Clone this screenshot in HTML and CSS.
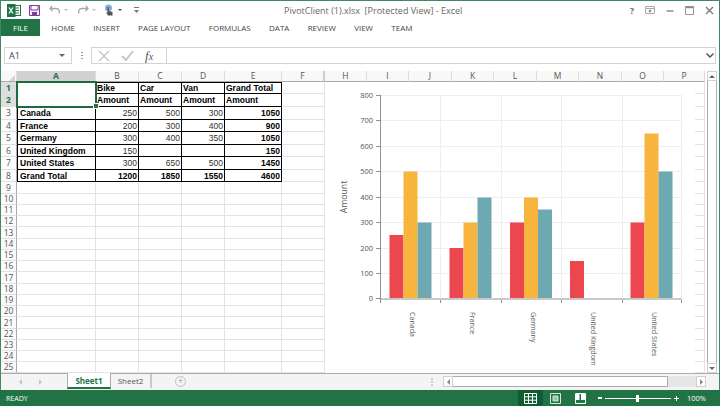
FILE: index.html
```html
<!DOCTYPE html>
<html>
    <head>
        <title>PivotClient (1).xlsx [Protected View] - Excel</title>
        <link rel="stylesheet" href="styles.css">
    </head>
    <body>
        <div id="window">
            <div id="titlebar">
                <div class="quick">
                    <svg width="14" height="13" viewBox="0 0 14 13"><rect x="6" y="1.5" width="7.5" height="10" fill="#fff" stroke="#217346"/><path d="M8 4h4M8 6.500h4M8 9h4" stroke="#217346"/><rect x="0" y="0" width="8.500" height="13" fill="#217346"/><path d="M2 3.500l4 6M6 3.500l-4 6" stroke="#fff" stroke-width="1.300" fill="none"/></svg>
                    <svg class="save" width="11" height="11" viewBox="0 0 11 11"><path d="M.5.500h10v10H.5z" fill="#f3e9f7" stroke="#7d3c98"/><path d="M2 .500h7v4.500H2z" fill="#fff" stroke="#7d3c98"/><path d="M3 7h5v3.500H3z" fill="#7d3c98"/></svg>
                    <svg class="undo" width="12" height="10" viewBox="0 0 12 10"><path d="M3 1L1 3.500 3.500 6M1 3.500h6c3 0 4 2 3 5" fill="none" stroke="#a6a6a6" stroke-width="1.300"/></svg>
                    <i class="arrow"></i>
                    <svg class="redo" width="12" height="10" viewBox="0 0 12 10"><path d="M9 1l2 2.500L8.500 6M11 3.500H5c-3 0-4 2-3 5" fill="none" stroke="#a6a6a6" stroke-width="1.300"/></svg>
                    <i class="arrow"></i>
                    <svg class="touch" width="11" height="13" viewBox="0 0 11 13"><circle cx="4.500" cy="4" r="3.500" fill="#7fb2dc"/><path d="M3.500 3h1.500v4l3.500 1v3.500H4L2 8.500h1.500z" fill="#555"/></svg>
                    <i class="arrow dark"></i>
                    <svg class="custom" width="5" height="6" viewBox="0 0 5 6"><path d="M0 .5h5" stroke="#777"/><path d="M0 3h5L2.500 6z" fill="#777"/></svg>
                </div>
                <div class="doc-title">PivotClient (1).xlsx&nbsp; [Protected View] - Excel</div>
                <div class="controls">
                    <span class="help">?</span>
                    <svg width="10" height="8" viewBox="0 0 10 8"><path d="M.5.500h9v7h-9z" fill="none" stroke="#aaa"/><path d="M.5 2.500h9" stroke="#aaa"/><path d="M5 3.500v3M3.500 5h3" stroke="#777"/></svg>
                    <svg width="8" height="8" viewBox="0 0 8 8"><path d="M.5 5h7" stroke="#777" stroke-width="1.300"/></svg>
                    <svg width="9" height="9" viewBox="0 0 9 9"><path d="M.5.500h8v8h-8z" fill="none" stroke="#999"/><path d="M.5 1.500h8" stroke="#888" stroke-width="1.500"/></svg>
                    <svg width="9" height="9" viewBox="0 0 9 9"><path d="M1 1l7 7M8 1l-7 7" stroke="#777" stroke-width="1.300"/></svg>
                </div>
            </div>
            <div id="tabs">
                <div class="file-tab">FILE</div>
                <span>HOME</span>
                <span>INSERT</span>
                <span>PAGE LAYOUT</span>
                <span>FORMULAS</span>
                <span>DATA</span>
                <span>REVIEW</span>
                <span>VIEW</span>
                <span>TEAM</span>
            </div>
            <div id="formula-bar">
                <div class="name-box">A1<i class="arrow dark"></i></div>
                <div class="grip"></div>
                <div class="fx-box">
                    <svg width="12" height="12" viewBox="0 0 12 12"><path d="M1 1l10 10M11 1L1 11" stroke="#c6c6c6" stroke-width="1.300"/></svg>
                    <svg width="13" height="11" viewBox="0 0 13 11"><path d="M1 6l4 4 7-9" fill="none" stroke="#c6c6c6" stroke-width="2"/></svg>
                    <span class="fx">f<em>x</em></span>
                </div>
                <div class="formula-input"><svg width="8" height="5" viewBox="0 0 8 5"><path d="M.5.500L4 4 7.500.500" fill="none" stroke="#555" stroke-width="1.500"/></svg></div>
            </div>
            <div id="main">
                <div id="grid-wrap">
                    <table id="grid">
                        <colgroup>
                            <col class="c-row"><col class="c-a"><col class="c-43"><col class="c-43"><col class="c-43"><col class="c-e"><col class="c-43">
                            <col class="c-42"><col class="c-42"><col class="c-43"><col class="c-42"><col class="c-43"><col class="c-42"><col class="c-43"><col class="c-42"><col class="c-41">
                        </colgroup>
                        <tr class="head">
                            <th class="corner"><i></i></th><th class="on">A</th><th>B</th><th>C</th><th>D</th><th>E</th><th class="thick">F</th>
                            <th>H</th><th>I</th><th>J</th><th>K</th><th>L</th><th>M</th><th>N</th><th>O</th><th>P</th>
                        </tr>
                        <tr class="h12 top"><th class="on">1</th><td rowspan="2" class="sel"></td><td class="p">Bike</td><td class="p">Car</td><td class="p">Van</td><td class="p">Grand Total</td><td></td><td colspan="9"></td></tr>
                        <tr class="h13"><th class="on">2</th><td class="p">Amount</td><td class="p">Amount</td><td class="p">Amount</td><td class="p">Amount</td><td></td><td colspan="9"></td></tr>
                        <tr class="h13"><th>3</th><td class="p name">Canada</td><td class="p num">250</td><td class="p num">500</td><td class="p num">300</td><td class="p tot">1050</td><td></td><td colspan="9"></td></tr>
                        <tr class="h12"><th>4</th><td class="p name">France</td><td class="p num">200</td><td class="p num">300</td><td class="p num">400</td><td class="p tot">900</td><td></td><td colspan="9"></td></tr>
                        <tr class="h13"><th>5</th><td class="p name">Germany</td><td class="p num">300</td><td class="p num">400</td><td class="p num">350</td><td class="p tot">1050</td><td></td><td colspan="9"></td></tr>
                        <tr class="h12"><th>6</th><td class="p name">United Kingdom</td><td class="p num">150</td><td class="p num"></td><td class="p num"></td><td class="p tot">150</td><td></td><td colspan="9"></td></tr>
                        <tr class="h13"><th>7</th><td class="p name">United States</td><td class="p num">300</td><td class="p num">650</td><td class="p num">500</td><td class="p tot">1450</td><td></td><td colspan="9"></td></tr>
                        <tr class="h12"><th>8</th><td class="p name">Grand Total</td><td class="p tot">1200</td><td class="p tot">1850</td><td class="p tot">1550</td><td class="p tot">4600</td><td></td><td colspan="9"></td></tr>
                        <tr class="h12"><th>9</th><td></td><td></td><td></td><td></td><td></td><td></td><td colspan="9"></td></tr>
                        <tr class="h11"><th>10</th><td></td><td></td><td></td><td></td><td></td><td></td><td colspan="9"></td></tr>
                        <tr class="h11"><th>11</th><td></td><td></td><td></td><td></td><td></td><td></td><td colspan="9"></td></tr>
                        <tr class="h11"><th>12</th><td></td><td></td><td></td><td></td><td></td><td></td><td colspan="9"></td></tr>
                        <tr class="h12"><th>13</th><td></td><td></td><td></td><td></td><td></td><td></td><td colspan="9"></td></tr>
                        <tr class="h11"><th>14</th><td></td><td></td><td></td><td></td><td></td><td></td><td colspan="9"></td></tr>
                        <tr class="h11"><th>15</th><td></td><td></td><td></td><td></td><td></td><td></td><td colspan="9"></td></tr>
                        <tr class="h11"><th>16</th><td></td><td></td><td></td><td></td><td></td><td></td><td colspan="9"></td></tr>
                        <tr class="h12"><th>17</th><td></td><td></td><td></td><td></td><td></td><td></td><td colspan="9"></td></tr>
                        <tr class="h11"><th>18</th><td></td><td></td><td></td><td></td><td></td><td></td><td colspan="9"></td></tr>
                        <tr class="h11"><th>19</th><td></td><td></td><td></td><td></td><td></td><td></td><td colspan="9"></td></tr>
                        <tr class="h11"><th>20</th><td></td><td></td><td></td><td></td><td></td><td></td><td colspan="9"></td></tr>
                        <tr class="h12"><th>21</th><td></td><td></td><td></td><td></td><td></td><td></td><td colspan="9"></td></tr>
                        <tr class="h11"><th>22</th><td></td><td></td><td></td><td></td><td></td><td></td><td colspan="9"></td></tr>
                        <tr class="h11"><th>23</th><td></td><td></td><td></td><td></td><td></td><td></td><td colspan="9"></td></tr>
                        <tr class="h11"><th>24</th><td></td><td></td><td></td><td></td><td></td><td></td><td colspan="9"></td></tr>
                        <tr class="h11"><th>25</th><td></td><td></td><td></td><td></td><td></td><td></td><td colspan="9"></td></tr>
                    </table>
                    <span class="handle"></span>
                    <!-- chart floats over the sheet, viewBox uses page coordinates -->
                    <svg id="chart" width="370" height="291" viewBox="325 82 370 291">
                        <rect x="325" y="82" width="370" height="291" fill="#fff"/>
                        <g class="gridline">
                            <path d="M380 95.500h302M380 120.500h302M380 146.500h302M380 171.500h302M380 197.500h302M380 222.500h302M380 248.500h302M380 273.500h302"/>
                            <path d="M440.500 95v204M501.500 95v204M561.500 95v204M622.500 95v204M681.500 95v204"/>
                        </g>
                        <g class="ticks">
                            <path d="M376 95.500h4M376 120.500h4M376 146.500h4M376 171.500h4M376 197.500h4M376 222.500h4M376 248.500h4M376 273.500h4M376 298.500h4"/>
                            <path d="M380.500 95v208M440.500 299v4M501.500 299v4M561.500 299v4M622.500 299v4M681.500 299v4"/>
                        </g>
                        <path d="M381 299h301" stroke="#c9c9c9" stroke-width="2"/>
                        <g class="red">
                            <rect x="389.500" y="235" width="14" height="63"/>
                            <rect x="449.500" y="248" width="14" height="50"/>
                            <rect x="510" y="222.500" width="14" height="75.500"/>
                            <rect x="570" y="261" width="14" height="37"/>
                            <rect x="630.500" y="222.500" width="14" height="75.500"/>
                        </g>
                        <g class="orange">
                            <rect x="403.500" y="171.500" width="14" height="126.500"/>
                            <rect x="463.500" y="222.500" width="14" height="75.500"/>
                            <rect x="524" y="197.500" width="14" height="100.500"/>
                            <rect x="644.500" y="133.500" width="14" height="164.500"/>
                        </g>
                        <g class="teal">
                            <rect x="417.500" y="222.500" width="14" height="75.500"/>
                            <rect x="477.500" y="197.500" width="14" height="100.500"/>
                            <rect x="538" y="209.500" width="14" height="88.500"/>
                            <rect x="658.500" y="171.500" width="14" height="126.500"/>
                        </g>
                        <g class="y-labels">
                            <text x="373" y="98">800</text>
                            <text x="373" y="123">700</text>
                            <text x="373" y="149">600</text>
                            <text x="373" y="174">500</text>
                            <text x="373" y="200">400</text>
                            <text x="373" y="225">300</text>
                            <text x="373" y="251">200</text>
                            <text x="373" y="276">100</text>
                            <text x="373" y="301">0</text>
                        </g>
                        <text class="y-title" transform="translate(347 197) rotate(-90)">Amount</text>
                        <g class="x-labels">
                            <text transform="translate(410 312) rotate(90)">Canada</text>
                            <text transform="translate(470 312) rotate(90)">France</text>
                            <text transform="translate(531 312) rotate(90)">Germany</text>
                            <text transform="translate(591 312) rotate(90)">United Kingdom</text>
                            <text transform="translate(652 312) rotate(90)">United States</text>
                        </g>
                    </svg>
                </div>
                <div id="vscroll">
                    <div class="sb-btn"><i class="up"></i></div>
                    <div class="sb-thumb"></div>
                    <div class="sb-btn"><i class="down"></i></div>
                </div>
            </div>
            <div id="sheetbar">
                <div class="nav"><i class="left"></i><i class="right"></i></div>
                <div class="sheet-tab active">Sheet1</div>
                <div class="sheet-tab">Sheet2</div>
                <div class="add">+</div>
                <div class="grip"></div>
                <div id="hscroll">
                    <div class="sb-btn"><i class="left"></i></div>
                    <div class="h-thumb"></div>
                    <div class="sb-btn"><i class="right"></i></div>
                </div>
            </div>
            <div id="status">
                <span class="ready">READY</span>
                <div class="view-btn on"><svg width="13" height="11" viewBox="0 0 13 11"><path d="M.5.500h12v10H.5zM.5 3.800h12M.5 7.200h12M4.500.500v10M8.500.500v10" fill="none" stroke="#fff"/></svg></div>
                <div class="view-btn"><svg width="11" height="11" viewBox="0 0 11 11"><path d="M.5.500h10v10H.5z" fill="none" stroke="#d5e6dc"/><path d="M3 3h5v5H3z" fill="#9cc4ad" stroke="#d5e6dc"/></svg></div>
                <div class="view-btn"><svg width="11" height="11" viewBox="0 0 11 11"><path d="M.5.500h10v10H.5z" fill="none" stroke="#fff"/><path d="M1 1h3.500v6H1zM6 1h4v6H6z" fill="#fff"/></svg></div>
                <div class="zoom">
                    <i class="minus"></i>
                    <div class="slider"><i></i></div>
                    <i class="plus"></i>
                </div>
                <span class="pct">100%</span>
            </div>
        </div>
    </body>
</html>
```

FILE: styles.css
```css
* {
    box-sizing: border-box;
}

html, body {
    margin: 0;
    height: 100%;
}

body {
    overflow: hidden;
    font-family: "Open Sans", "Noto Sans", sans-serif;
    color: #444;
}

i {
    display: block;
}

#window {
    width: 720px;
    height: 406px;
    display: flex;
    flex-direction: column;
    border: 1px solid #3f8a63;
    border-bottom: none;
    background: #fff;
}

/* title bar */
#titlebar {
    height: 18px;
    display: flex;
    align-items: center;
    position: relative;
    flex: none;
}

.quick {
    display: flex;
    align-items: center;
    padding-left: 6px;
    width: 200px;
}

.quick .save {
    margin-left: 8px;
}

.quick .undo {
    margin-left: 9px;
}

.quick .redo {
    margin-left: 9px;
}

.quick .touch {
    margin-left: 8px;
}

.quick .custom {
    margin-left: 12px;
}

.arrow {
    width: 0;
    height: 0;
    margin-left: 3px;
    border-left: 2px solid transparent;
    border-right: 2px solid transparent;
    border-top: 2px solid #bbb;
}

.arrow.dark {
    border-top-color: #444;
}

.doc-title {
    position: absolute;
    left: 283px;
    top: 4px;
    font-size: 9px;
    line-height: 11px;
    white-space: nowrap;
    color: #666;
}

.controls {
    margin-left: auto;
    display: flex;
    align-items: center;
    gap: 11px;
    padding-right: 5px;
}

.help {
    font-size: 8.500px;
    font-weight: bold;
    line-height: 11px;
    color: #666;
}

/* ribbon tabs */
#tabs {
    height: 17px;
    flex: none;
    display: flex;
    align-items: center;
    gap: 18.300px;
    font-size: 8px;
    color: #444;
}

.file-tab {
    width: 39px;
    height: 17px;
    margin-right: -7px;
    background: #217346;
    color: #fff;
    text-align: center;
    line-height: 17px;
}

/* formula bar */
#formula-bar {
    height: 18px;
    flex: none;
    margin-top: 10px;
    display: flex;
    align-items: stretch;
    padding: 1px 3px 0 3px;
}

.name-box {
    width: 68px;
    border: 1px solid #d4d4d4;
    display: flex;
    align-items: center;
    justify-content: space-between;
    padding: 0 6px 0 4px;
    font-size: 9px;
}

.name-box .arrow {
    border-left-width: 3px;
    border-right-width: 3px;
    border-top-width: 3px;
    border-top-color: #666;
}

#formula-bar .grip {
    width: 19px;
    background: radial-gradient(circle, #999 0.7px, transparent 1px) center / 2px 3px repeat-y;
    background-size: 2px 3px;
    margin: 4px 0;
}

.fx-box {
    width: 75px;
    border: 1px solid #d4d4d4;
    border-right: none;
    display: flex;
    align-items: center;
    gap: 11px;
    padding-left: 6px;
}

.fx {
    font-family: "Liberation Serif", serif;
    font-style: italic;
    font-size: 13px;
    color: #555;
}

.fx em {
    font-size: 10px;
}

.formula-input {
    flex: 1;
    border: 1px solid #d4d4d4;
    display: flex;
    align-items: center;
    justify-content: flex-end;
    padding-right: 1px;
}

/* sheet */
#main {
    margin-top: 7px;
    height: 302px;
    flex: none;
    display: flex;
}

#grid-wrap {
    position: relative;
    width: 704px;
    height: 302px;
    overflow: hidden;
}

#grid {
    table-layout: fixed;
    width: 704px;
    border-collapse: separate;
    border-spacing: 0;
    font-family: "Liberation Sans", sans-serif;
}

.c-row { width: 16px; }
.c-a { width: 79px; }
.c-e { width: 57px; }
.c-43 { width: 43px; }
.c-42 { width: 42px; }
.c-41 { width: 41px; }

#grid th, #grid td {
    padding: 0;
    overflow: hidden;
    white-space: nowrap;
}

#grid th {
    font-family: "Open Sans", sans-serif;
    font-weight: normal;
    font-size: 8.500px;
    line-height: 10px;
    text-align: center;
    color: #555;
    background: #fcfcfc;
    border-right: 1px solid #ababab;
    border-bottom: 1px solid #e0e0e0;
}

#grid td {
    font-size: 8.500px;
    line-height: 10px;
    color: #000;
    border-right: 1px solid #e3e3e3;
    border-bottom: 1px solid #e3e3e3;
}

.head {
    height: 11px;
}

#grid .head th {
    border-right: 1px solid #dcdcdc;
    border-bottom: 1px solid #ababab;
    background: #f8f8f8;
}

#grid .head th.thick {
    border-right: 2px solid #ccc;
}

.corner i {
    width: 0;
    height: 0;
    margin: 3px 0 0 8px;
    border-left: 6px solid transparent;
    border-bottom: 6px solid #d4d4d4;
}

#grid .head th.on {
    background: #d2d2d2;
    color: #217346;
    font-weight: bold;
}

#grid th.on {
    background: #dedede;
    color: #217346;
    font-weight: bold;
}

.h11 { height: 11px; }
.h12 { height: 12px; }
.h13 { height: 13px; }

#grid td.p {
    border-right: 1px solid #000;
    border-bottom: 1px solid #000;
    font-weight: bold;
    padding: 0 1px;
    overflow: hidden;
}

#grid .top td.p {
    border-top: 1px solid #000;
}

#grid td.name {
    border-left: 1px solid #000;
    padding-left: 2px;
}

#grid td.num {
    font-weight: normal;
    text-align: right;
    color: #333;
}

#grid td.tot {
    text-align: right;
    padding-right: 1px;
}

#grid td.sel {
    outline: 2px solid #1d6a3f;
    outline-offset: -1px;
    border: none;
}

.handle {
    position: absolute;
    left: 93px;
    top: 33px;
    width: 4px;
    height: 4px;
    background: #217346;
    border: 1px solid #fff;
    box-sizing: content-box;
    margin: -1px;
}

/* chart */
#chart {
    position: absolute;
    left: 324px;
    top: 11px;
    font-family: "Open Sans", sans-serif;
}

.gridline path {
    fill: none;
    stroke: #eeeeee;
}

.ticks path {
    fill: none;
    stroke: #909090;
}

.red { fill: #ec474e; }
.orange { fill: #f7b53e; }
.teal { fill: #6ea8b1; }

.y-labels text {
    font-size: 7.500px;
    text-anchor: end;
    fill: #555;
}

.y-title {
    font-size: 8.700px;
    text-anchor: middle;
    fill: #555;
}

.x-labels text {
    font-size: 7.100px;
    fill: #555;
}

/* scrollbars */
#vscroll {
    width: 10px;
    margin: 0 2px 0 2px;
    display: flex;
    flex-direction: column;
}

.sb-btn {
    width: 10px;
    height: 10px;
    flex: none;
    border: 1px solid #d0d0d0;
    display: flex;
    align-items: center;
    justify-content: center;
}

.sb-thumb {
    flex: 1;
    border: 1px solid #ababab;
    border-top: none;
    border-bottom: none;
}

.up, .down, .left, .right {
    width: 0;
    height: 0;
    border: 2px solid transparent;
}

.up {
    border-top: none;
    border-bottom-color: #666;
    border-left-width: 3px;
    border-right-width: 3px;
    border-bottom-width: 3px;
}

.down {
    border-bottom: none;
    border-top-color: #666;
    border-left-width: 3px;
    border-right-width: 3px;
    border-top-width: 3px;
}

.left {
    border-left: none;
    border-right: 3px solid #888;
    border-top-width: 3px;
    border-bottom-width: 3px;
}

.right {
    border-right: none;
    border-left: 3px solid #888;
    border-top-width: 3px;
    border-bottom-width: 3px;
}

/* sheet tabs */
#sheetbar {
    height: 17px;
    flex: none;
    display: flex;
    align-items: stretch;
    background: #f4f4f4;
    border-top: 1px solid #ababab;
    font-size: 8px;
}

.nav {
    width: 66px;
    display: flex;
    align-items: center;
    gap: 17px;
    padding-left: 18px;
}

.nav .left { border-right-color: #c4c4c4; }
.nav .right { border-left-color: #c4c4c4; }

.sheet-tab {
    width: 42px;
    line-height: 14px;
    text-align: center;
    color: #555;
    background: #fff;
}

.sheet-tab.active {
    width: 44px;
    margin-top: -1px;
    height: 16px;
    color: #217346;
    font-weight: bold;
    border-left: 1px solid #ababab;
    border-right: 1px solid #ababab;
    border-bottom: 2px solid #217346;
    line-height: 15px;
}

.sheet-tab:not(.active) {
    width: 41px;
    border-right: 2px solid #c8c8c8;
    margin-bottom: 2px;
    background: transparent;
}

.add {
    width: 11px;
    height: 11px;
    margin: 2px 0 0 23px;
    border: 1px solid #c0c0c0;
    border-radius: 50%;
    font-size: 9px;
    line-height: 8px;
    text-align: center;
    color: #999;
}

#sheetbar .grip {
    width: 6px;
    margin: 3px 0 3px 243px;
    background: radial-gradient(circle, #aaa 0.7px, transparent 1px) center / 2px 3px repeat-y;
}

#hscroll {
    width: 263px;
    margin: 2px 0 3px 8px;
    display: flex;
    background: #e6e6e6;
}

#hscroll .sb-btn {
    height: 11px;
    background: #fff;
}

.h-thumb {
    width: 215px;
    margin-right: 28px;
    background: #fff;
    border: 1px solid #ababab;
    border-left: none;
}

/* status bar */
#status {
    height: 16px;
    flex: none;
    display: flex;
    align-items: center;
    background: #217346;
    color: #fff;
    font-size: 7px;
    margin: 0 -1px;
}

.ready {
    padding-left: 6px;
    width: 518px;
}

.view-btn {
    width: 25px;
    height: 16px;
    display: flex;
    align-items: center;
    justify-content: center;
}

.view-btn.on {
    background: #0f5c32;
}

.zoom {
    display: flex;
    align-items: center;
    margin-left: 5px;
    gap: 1px;
}

.minus {
    width: 4px;
    height: 2px;
    background: #fff;
}

.slider {
    width: 66px;
    height: 1px;
    margin: 0 2px;
    background: #fff;
    position: relative;
}

.slider i {
    position: absolute;
    left: 31px;
    top: -3px;
    width: 3px;
    height: 7px;
    background: #fff;
}

.plus {
    width: 5px;
    height: 5px;
    background: linear-gradient(#fff, #fff) center / 5px 1px no-repeat, linear-gradient(#fff, #fff) center / 1px 5px no-repeat;
}

.pct {
    margin-left: 8px;
    font-size: 7.500px;
}
```
